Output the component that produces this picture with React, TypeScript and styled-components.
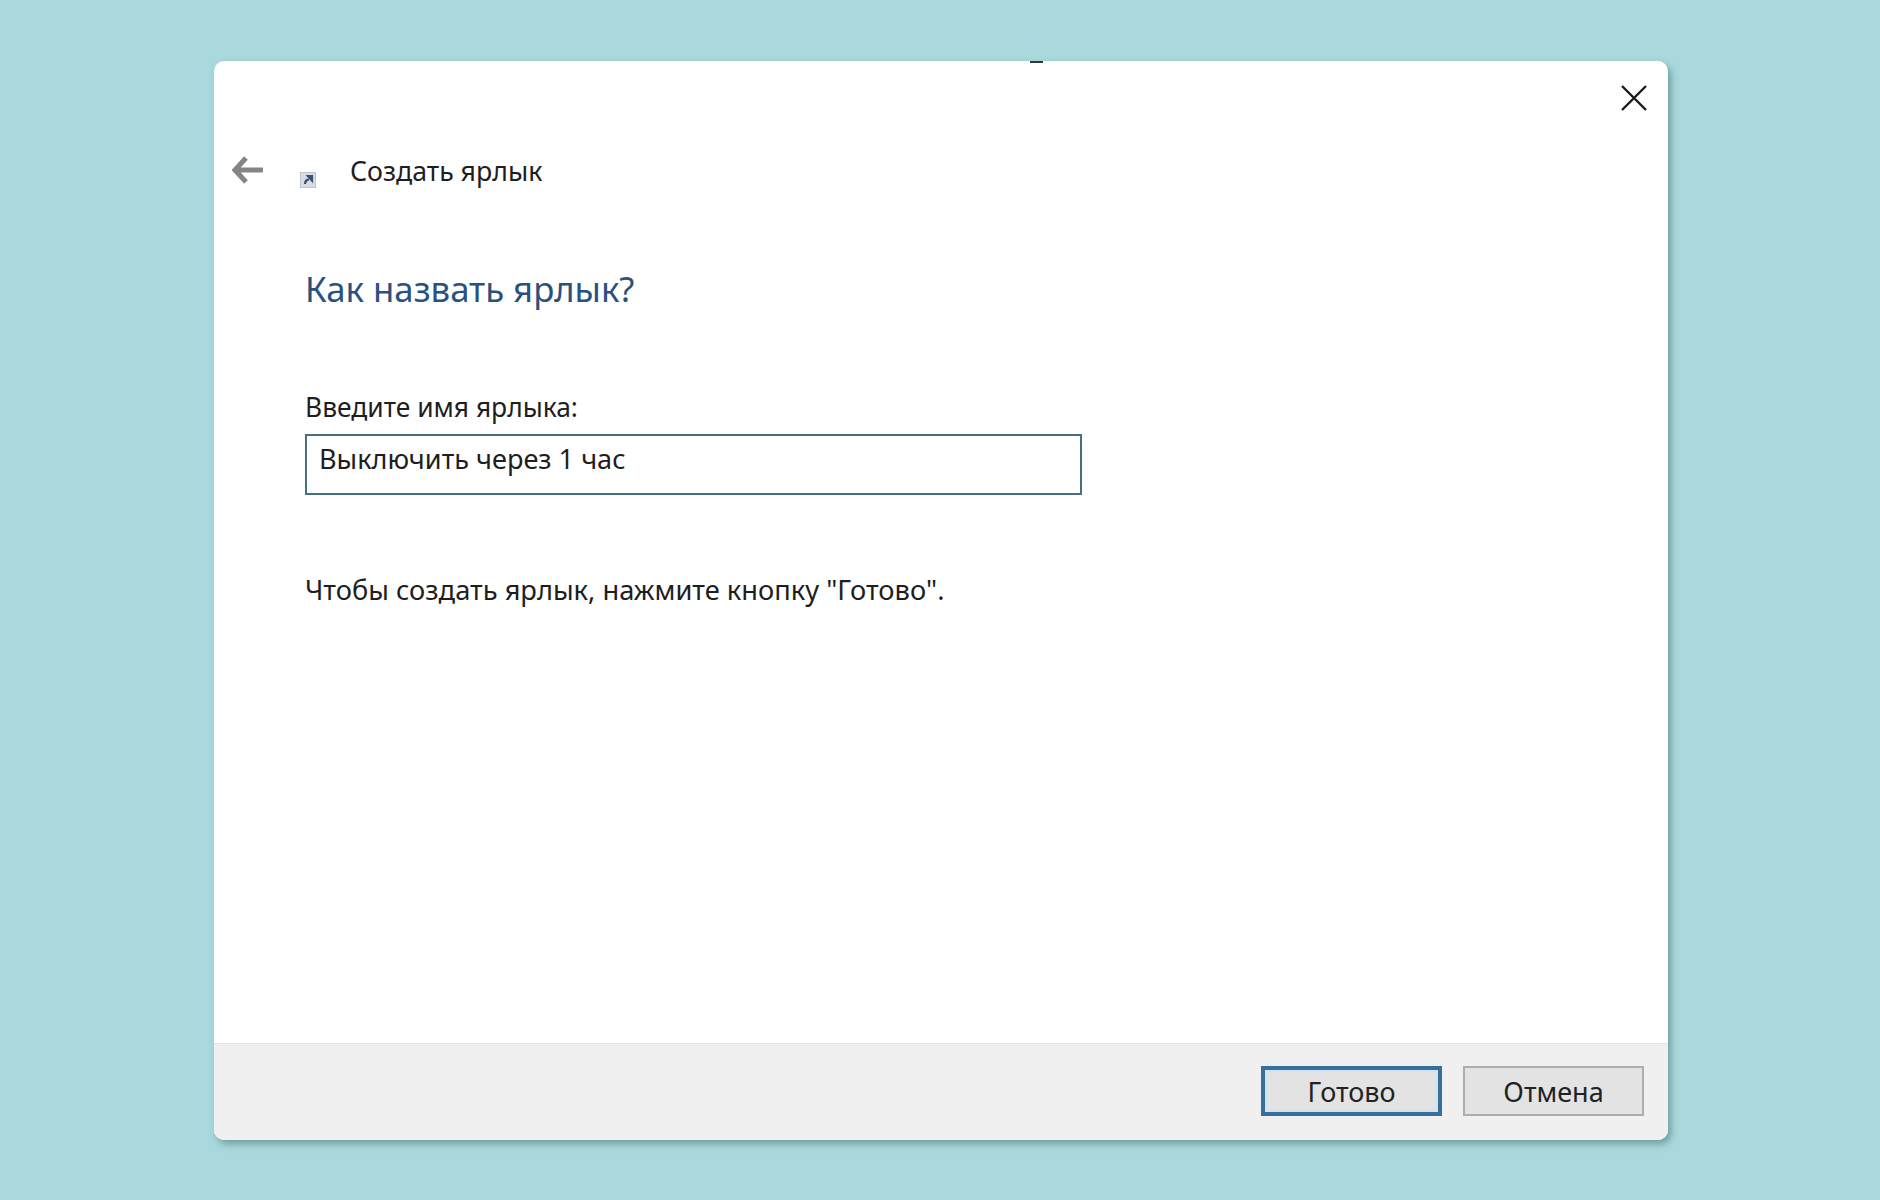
import * as React from 'react';
import { createGlobalStyle, styled } from 'styled-components';

const GlobalStyle = createGlobalStyle`
  html, body {
    margin: 0;
    padding: 0;
    background: #a9d9dc;
  }
`;

const Page = styled.div`
  box-sizing: border-box;
  width: 1880px;
  height: 1200px;
  padding: 61px 212px 60px 214px;
  background: #a9d9dc;
  font-family: "Noto Sans", "Open Sans", sans-serif;
  color: #1c1c1c;
`;

const Window = styled.div`
  position: relative;
  display: flex;
  flex-direction: column;
  width: 1454px;
  height: 1079px;
  background: #fff;
  border-radius: 10px;
  box-shadow: 3px 4px 7px rgba(60, 110, 115, 0.55);
  overflow: hidden;
`;

const TopMark = styled.div`
  position: absolute;
  top: 0;
  left: 816px;
  width: 13px;
  height: 2px;
  background: #2b3a44;
`;

const CloseButton = styled.div`
  position: absolute;
  top: 23px;
  right: 20px;
  width: 28px;
  height: 28px;
  color: #1a1a1a;
`;

const Header = styled.div`
  display: flex;
  align-items: center;
  height: 48px;
  margin-top: 86px;
  padding-left: 18px;
`;

const BackArrow = styled.div`
  width: 32px;
  height: 30px;
  margin-top: -3px;
  color: #858585;
`;

const ShortcutIcon = styled.div`
  width: 16px;
  height: 16px;
  margin: 16px 0 0 36px;
`;

const HeaderTitle = styled.div`
  margin-left: 34px;
  font-size: 26.7px;
  line-height: 36px;
  color: #1e1e1e;
`;

const Body = styled.div`
  flex: 1;
  display: flex;
  flex-direction: column;
  padding: 0 0 0 91px;
`;

const Heading = styled.div`
  margin-top: 70px;
  font-size: 34.7px;
  line-height: 48px;
  color: #2a5080;
`;

const FieldLabel = styled.div`
  margin-top: 77px;
  font-size: 26.4px;
  line-height: 34px;
  color: #1e1e1e;
`;

const NameField = styled.div`
  box-sizing: border-box;
  width: 777px;
  height: 61px;
  margin-top: 10px;
  padding: 6px 12px;
  border: 2px solid #44707f;
  font-size: 27.1px;
  line-height: 34px;
  color: #1e1e1e;
`;

const Hint = styled.div`
  margin-top: 78px;
  font-size: 27.25px;
  line-height: 34px;
  color: #1e1e1e;
`;

const Footer = styled.div`
  display: flex;
  justify-content: flex-end;
  gap: 21px;
  height: 97px;
  padding: 22px 24px 0 0;
  box-sizing: border-box;
  background: #f0f0f0;
  border-top: 1px solid #e2e2e2;
`;

const ActionButton = styled.div<{ $primary?: boolean }>`
  box-sizing: border-box;
  display: flex;
  align-items: center;
  justify-content: center;
  width: 181px;
  height: 50px;
  background: #e3e3e3;
  border: ${(p) => (p.$primary ? '4px solid #35709b' : '2px solid #adadad')};
  box-shadow: ${(p) => (p.$primary ? 'inset 0 0 3px 1px #bfe6f7' : 'none')};
  font-size: 27px;
  color: #222;
`;

export default function App() {
  return (
    <Page>
      <GlobalStyle />
      <Window>
        <TopMark />
        <CloseButton>
          <svg width="28" height="28" viewBox="0 0 28 28">
            <path d="M2 2 L26 26 M26 2 L2 26" stroke="currentColor" strokeWidth="2.4" fill="none" />
          </svg>
        </CloseButton>

        <Header>
          <BackArrow>
            <svg width="32" height="30" viewBox="0 0 32 30">
              <path d="M14 3 L3 15 L14 27 M3 15 H31" stroke="currentColor" strokeWidth="5" fill="none" />
            </svg>
          </BackArrow>
          <ShortcutIcon>
            <svg width="16" height="16" viewBox="0 0 16 16">
              <rect x="0.5" y="0.5" width="15" height="15" fill="#d5dde6" stroke="#bcc6d0" />
              <path d="M5 12 C5 9 6.5 7.5 9 7.5 M8 4 H12 V8.5 Z" stroke="#3a5270" strokeWidth="2.2" fill="#3a5270" />
            </svg>
          </ShortcutIcon>
          <HeaderTitle>Создать ярлык</HeaderTitle>
        </Header>

        <Body>
          <Heading>Как назвать ярлык?</Heading>
          <FieldLabel>Введите имя ярлыка:</FieldLabel>
          <NameField>Выключить через 1 час</NameField>
          <Hint>Чтобы создать ярлык, нажмите кнопку "Готово".</Hint>
        </Body>

        <Footer>
          <ActionButton $primary>Готово</ActionButton>
          <ActionButton>Отмена</ActionButton>
        </Footer>
      </Window>
    </Page>
  );
}
